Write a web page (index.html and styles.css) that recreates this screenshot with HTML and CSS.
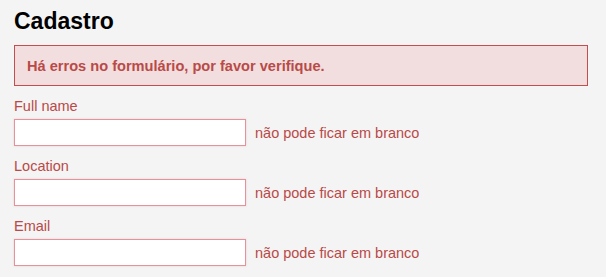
FILE: index.html
```html
<!DOCTYPE html>
<html lang="pt">
<head>
<meta charset="utf-8">
<title>Cadastro</title>
<link rel="stylesheet" href="styles.css">
</head>
<body>
<div class="page">
  <h1 class="title">Cadastro</h1>
  <div class="alert">Há erros no formulário, por favor verifique.</div>
  <form class="form">
    <div class="group">
      <label class="label" for="f1">Full name</label>
      <div class="row">
        <input class="input" id="f1" type="text">
        <span class="help">não pode ficar em branco</span>
      </div>
    </div>
    <div class="group">
      <label class="label" for="f2">Location</label>
      <div class="row">
        <input class="input" id="f2" type="text">
        <span class="help">não pode ficar em branco</span>
      </div>
    </div>
    <div class="group">
      <label class="label" for="f3">Email</label>
      <div class="row">
        <input class="input" id="f3" type="text">
        <span class="help">não pode ficar em branco</span>
      </div>
    </div>
  </form>
</div>
</body>
</html>
```
FILE: styles.css
```css
html, body {
  margin: 0;
  padding: 0;
  background: #f4f4f4;
  font-family: "Liberation Sans", Arial, Helvetica, sans-serif;
}
.page {
  padding: 8px 18px 0 14px;
}
.title {
  margin: 0;
  font-size: 23px;
  line-height: 26px;
  font-weight: bold;
  color: #000;
}
.alert {
  margin-top: 11px;
  border: 1px solid #c24f4d;
  background: #f2dede;
  color: #b94a48;
  font-weight: bold;
  font-size: 14.6px;
  line-height: 20px;
  padding: 10px 12px 9px 12px;
}
.form {
  margin-top: 11px;
}
.group {
  margin-bottom: 11px;
}
.label {
  display: block;
  color: #b94a48;
  font-size: 14.5px;
  line-height: 18px;
  margin-bottom: 4px;
}
.row {
  display: flex;
  align-items: center;
  gap: 9px;
}
.input {
  -webkit-appearance: none;
  appearance: none;
  box-sizing: border-box;
  width: 232px;
  height: 27px;
  margin: 0;
  border: 1px solid #e4939a;
  border-radius: 0;
  background: #fff;
  box-shadow: 0 0 2px rgba(210, 110, 115, 0.3);
  padding: 3px 6px;
  font-family: inherit;
  font-size: 14px;
  outline: none;
}
.help {
  color: #b94a48;
  font-size: 14.5px;
  line-height: 18px;
}
```
